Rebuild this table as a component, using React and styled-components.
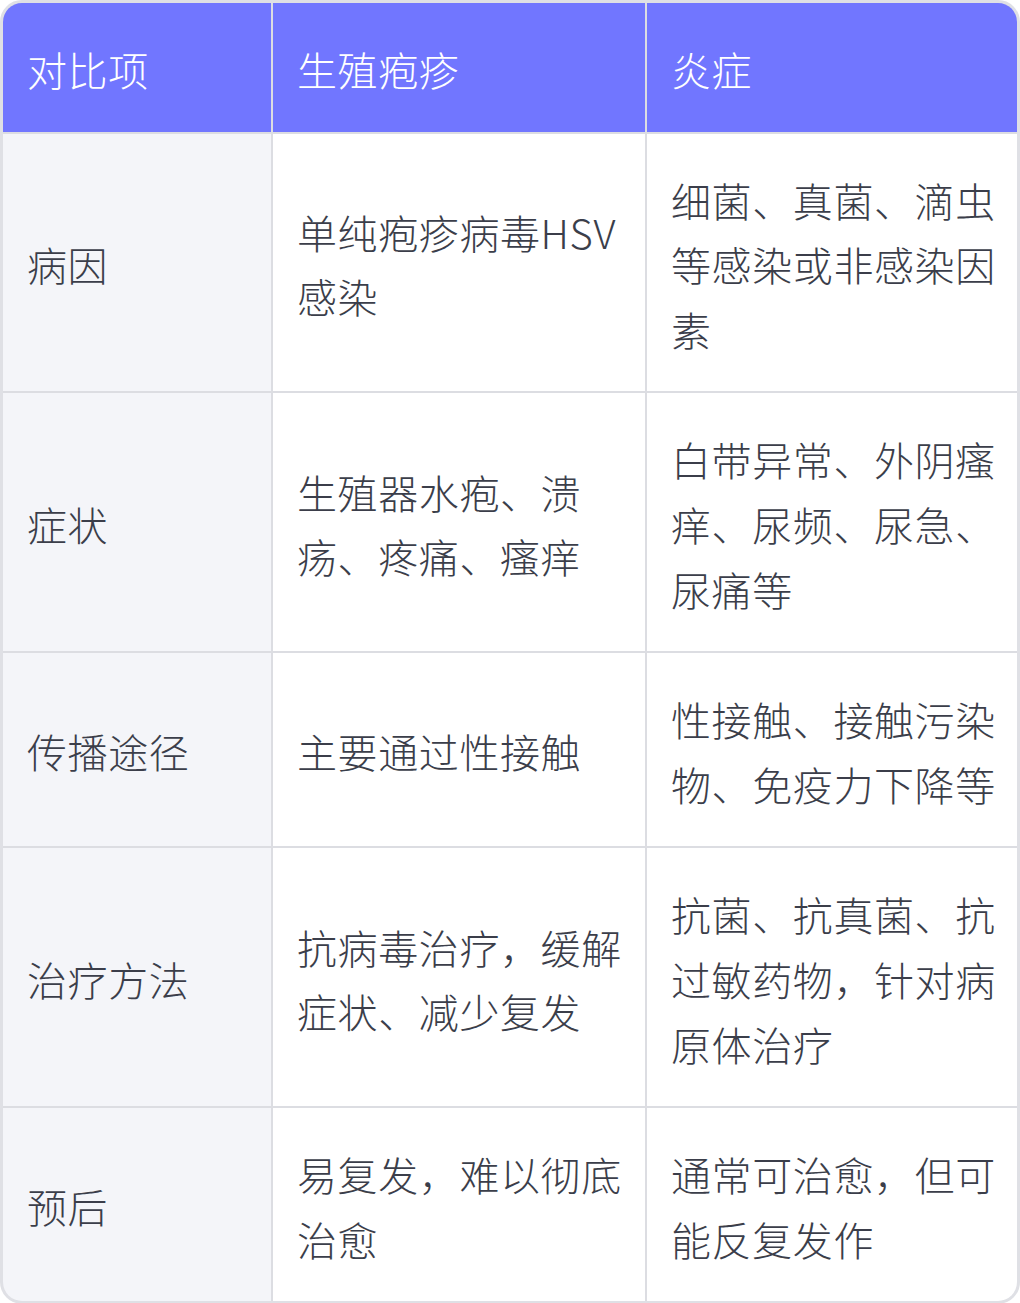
import React from "react";
import styled, { createGlobalStyle } from "styled-components";

const Global = createGlobalStyle`
  html, body {
    margin: 0;
    padding: 0;
    background: #ffffff;
  }
  body {
    font-family: "Noto Sans CJK SC", "Noto Sans", sans-serif;
  }
`;

const Table = styled.div`
  width: 1020px;
  box-sizing: border-box;
  border: 3px solid #dfe0e5;
  border-radius: 22px;
  overflow: hidden;
  display: grid;
  grid-template-columns: 268px 372px 1fr;
  gap: 2px;
  background: #dcdde2;
`;

const Cell = styled.div`
  display: flex;
  align-items: center;
  padding: 34px 16px 30px 24px;
  font-size: 40px;
  line-height: 64.6px;
  letter-spacing: 0.6px;
  font-weight: 300;
  color: ${(p) => (p.$head ? "#ffffff" : "#3b3e4a")};
  background: ${(p) => (p.$head ? "#7176ff" : p.$label ? "#f4f5f9" : "#ffffff")};
`;

const head = ["对比项", "生殖疱疹", "炎症"];

const rows = [
  ["病因", "单纯疱疹病毒HSV感染", "细菌、真菌、滴虫等感染或非感染因素"],
  ["症状", "生殖器水疱、溃疡、疼痛、瘙痒", "白带异常、外阴瘙痒、尿频、尿急、尿痛等"],
  ["传播途径", "主要通过性接触", "性接触、接触污染物、免疫力下降等"],
  ["治疗方法", "抗病毒治疗，缓解症状、减少复发", "抗菌、抗真菌、抗过敏药物，针对病原体治疗"],
  ["预后", "易复发，难以彻底治愈", "通常可治愈，但可能反复发作"],
];

export default function App() {
  return (
    <>
      <Global />
      <Table>
        {head.map((h) => (
          <Cell key={h} $head>
            {h}
          </Cell>
        ))}
        {rows.map((r) =>
          r.map((c, i) => (
            <Cell key={r[0] + i} $label={i === 0}>
              {c}
            </Cell>
          ))
        )}
      </Table>
    </>
  );
}
